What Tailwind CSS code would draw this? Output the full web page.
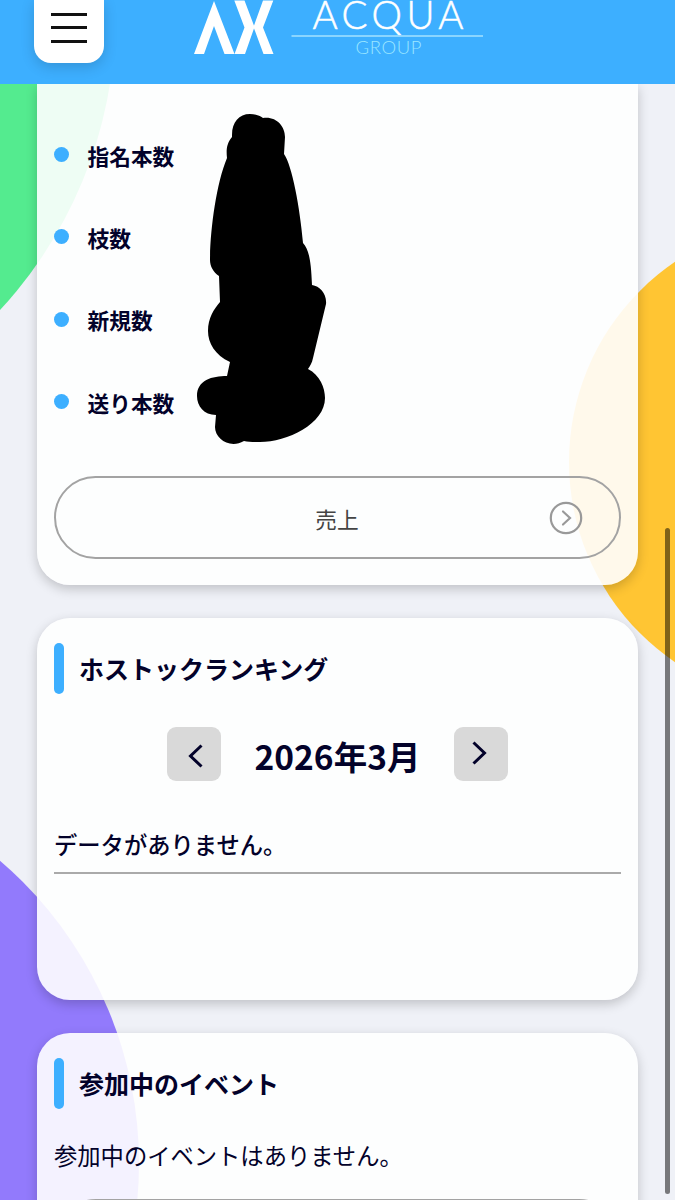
<!DOCTYPE html>
<html lang="ja">
<head>
    <meta charset="UTF-8">
    <meta name="viewport" content="width=device-width, initial-scale=1.0">
    <title>ACQUA GROUP</title>
    <script src="https://cdn.jsdelivr.net/npm/@tailwindcss/browser@4"></script>
</head>
<body class="relative h-[1200px] overflow-hidden bg-[#eff1f7] font-['Noto_Sans_CJK_JP',sans-serif] text-[#03022a]">
    <!-- Background circles -->
    <svg class="absolute inset-0" width="675" height="1200" viewBox="0 0 675 1200">
        <circle cx="-319" cy="15" r="434.500" fill="#54eb8f" />
        <circle cx="811" cy="462" r="242" fill="#ffc533" />
        <circle cx="-259" cy="1163" r="398" fill="#927afc" />
    </svg>

    <div class="relative flex h-[1200px] flex-col overflow-hidden">
        <header class="relative z-10 flex h-[84px] shrink-0 items-start bg-[#3dafff]">
            <button class="ml-[34px] flex h-[63px] w-[70px] flex-col items-center gap-[10.500px] rounded-b-[17px] bg-white pt-[12.500px] shadow-[0_4px_14px_rgba(0,0,0,0.16)]">
                <span class="h-[3px] w-9 bg-[#111]"></span>
                <span class="h-[3px] w-9 bg-[#111]"></span>
                <span class="h-[3px] w-9 bg-[#111]"></span>
            </button>
            <svg class="ml-[90px]" width="290" height="60" viewBox="0 0 290 60">
                <g fill="#fff">
                    <path d="M20 1L0 54H10L20 26L30.500 54H40.500Z" />
                    <path d="M40.300 0.500H50.500L60.500 27L51 54H40.500L50.500 27.500Z" />
                    <path d="M79.300 0.500H69L59.500 27L69.500 54H79.500L69 27.500Z" />
                    <text x="118.500" y="29" font-family="Lato" font-weight="300" font-size="38.500" textLength="151" stroke="#fff" stroke-width="0.500">ACQUA</text>
                </g>
                <path d="M97.500 36H289" stroke="#a5e2ff" stroke-width="1.500" />
                <text x="161.500" y="54" font-family="Lato" font-weight="300" font-size="18.500" textLength="66" fill="#9be6ff">GROUP</text>
            </svg>
        </header>

        <main class="flex flex-col gap-[33px] px-[37px]">
            <section class="relative h-[501px] w-[601px] shrink-0 rounded-b-[33px] bg-white/90 px-[17px] pt-[30px] shadow-[0_4px_12px_rgba(0,0,0,0.2)]">
                <ul class="text-[21.700px] font-bold">
                    <li class="flex h-[82.300px] items-start gap-[18.500px]"><span class="mt-[33px] h-[15px] w-[15px] rounded-full bg-[#3dafff]"></span><span class="mt-[26px] leading-8">指名本数</span></li>
                    <li class="flex h-[82.300px] items-start gap-[18.500px]"><span class="mt-[33px] h-[15px] w-[15px] rounded-full bg-[#3dafff]"></span><span class="mt-[26px] leading-8">枝数</span></li>
                    <li class="flex h-[82.300px] items-start gap-[18.500px]"><span class="mt-[33px] h-[15px] w-[15px] rounded-full bg-[#3dafff]"></span><span class="mt-[25.500px] leading-8">新規数</span></li>
                    <li class="flex h-[82.300px] items-start gap-[18.500px]"><span class="mt-[33px] h-[15px] w-[15px] rounded-full bg-[#3dafff]"></span><span class="mt-[26px] leading-8">送り本数</span></li>
                </ul>
                <a class="mt-[32.800px] flex h-[83.500px] w-[567px] items-center justify-center rounded-full border-2 border-[#a3a3a3] text-[21.700px] text-[#444]" href="#">
                    <span class="w-[34px] shrink-0"></span>
                    <span class="flex-1 pt-[3px] pl-[35px] text-center">売上</span>
                    <svg class="mr-[36px]" width="34" height="34" viewBox="0 0 34 34" fill="none" stroke="#999">
                        <circle cx="17" cy="17" r="15.200" stroke-width="2.200" />
                        <path d="M14 10.500L21 17L14 23.500" stroke-width="2.200" stroke-linecap="round" />
                    </svg>
                </a>
                <!-- Hidden values -->
                <svg class="absolute left-[143px] top-4" width="160" height="360" viewBox="180 100 160 360">
                    <path d="M232 135C232 122 239 114 250 114C256 114 260 116 263 118C276 116 285 126 285 137L284 154C292 165 300 208 303 243C309 250 311 260 312 285C320 286 327 294 326 304L313 358C312 363 310 366 308 369C320 375 325 388 325 398C325 424 287 442 260 442C253 442 248 442 244 441C230 449 215 439 215 427L216 415C204 415 197 406 197 396C197 380 212 376 227 376L230 362C215 355 208 343 208 331C208 318 214 309 220 302L219 276C213 272 210 266 210 260C210 232 216 184 227 158C226 149 227 143 232 137Z" fill="#000" />
                </svg>
            </section>

            <section class="h-[382px] w-[601px] shrink-0 rounded-[33px] bg-white/90 px-[17px] pt-[25px] shadow-[0_4px_12px_rgba(0,0,0,0.2)]">
                <h2 class="flex h-[51px] items-center gap-[15px] text-[25px] font-bold"><span class="h-full w-[10px] rounded-full bg-[#3dafff]"></span>ホストックランキング</h2>
                <div class="mt-[33px] flex h-[54px] items-center justify-center gap-[33px]">
                    <button class="flex h-[54px] w-[54px] items-center justify-center rounded-[9px] bg-[#d9d9d9]">
                        <svg width="54" height="54" viewBox="0 0 54 54" fill="none" stroke="#03022a" stroke-width="3"><path d="M34.500 18.500L23.500 29L34.500 39.500" /></svg>
                    </button>
                    <span class="w-[167px] whitespace-nowrap pt-1 text-center text-[33.500px] leading-[54px] font-bold">2026年3月</span>
                    <button class="flex h-[54px] w-[54px] items-center justify-center rounded-[9px] bg-[#d9d9d9]">
                        <svg width="54" height="54" viewBox="0 0 54 54" fill="none" stroke="#03022a" stroke-width="3"><path d="M19.500 15.500L30.500 26L19.500 36.500" /></svg>
                    </button>
                </div>
                <p class="mt-[42px] h-[51px] border-b-2 border-[#aaa] text-[23.300px] leading-[42px] font-medium">データがありません。</p>
            </section>

            <section class="h-[300px] w-[601px] shrink-0 rounded-[33px] bg-white/90 px-[17px] pt-[25px] shadow-[0_4px_12px_rgba(0,0,0,0.2)]">
                <h2 class="flex h-[51px] items-center gap-[15px] text-[25px] font-bold"><span class="h-full w-[10px] rounded-full bg-[#3dafff]"></span>参加中のイベント</h2>
                <p class="mt-[25px] text-[23.300px] leading-[42px]">参加中のイベントはありません。</p>
                <div class="mt-[22.500px] h-[84px] w-[567px] rounded-full border-2 border-[#a3a3a3]"></div>
            </section>
        </main>
    </div>

    <!-- Scrollbar -->
    <div class="absolute left-[665px] top-[528px] z-20 h-[666px] w-[5px] rounded-full bg-black/50"></div>
</body>
</html>
